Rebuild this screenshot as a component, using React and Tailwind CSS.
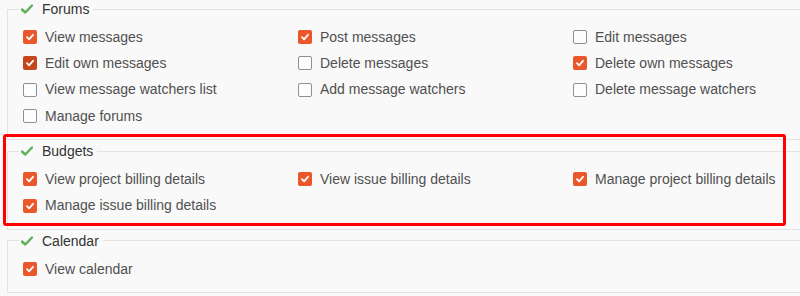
const groups = [
  {
    name: "Forums",
    items: [
      { label: "View messages", checked: true },
      { label: "Post messages", checked: true },
      { label: "Edit messages", checked: false },
      { label: "Edit own messages", checked: true, active: true },
      { label: "Delete messages", checked: false },
      { label: "Delete own messages", checked: true },
      { label: "View message watchers list", checked: false },
      { label: "Add message watchers", checked: false },
      { label: "Delete message watchers", checked: false },
      { label: "Manage forums", checked: false },
    ],
  },
  {
    name: "Budgets",
    items: [
      { label: "View project billing details", checked: true },
      { label: "View issue billing details", checked: true },
      { label: "Manage project billing details", checked: true },
      { label: "Manage issue billing details", checked: true },
    ],
  },
  {
    name: "Calendar",
    items: [{ label: "View calendar", checked: true }],
  },
];

const GreenCheck = () => (
  <svg width="12" height="10" viewBox="0 0 12 10" className="shrink-0">
    <path d="M1 5.5 L4.3 8.5 L11 1.5" fill="none" stroke="#5fae58" strokeWidth="2.4" strokeLinecap="round" strokeLinejoin="round" />
  </svg>
);

const Box = ({ checked, active }) => {
  if (!checked) {
    return <span className="block w-[14px] h-[14px] shrink-0 rounded-[2px] border-[1.5px] border-[#8e8e9c] bg-[#fdfdfd]" />;
  }
  return (
    <span className={`flex items-center justify-center w-[14px] h-[14px] shrink-0 rounded-[2px] ${active ? "bg-[#c4461c]" : "bg-[#ea572a]"}`}>
      <svg width="10" height="10" viewBox="0 0 10 10">
        <path d="M2 5.2 L4.1 7.3 L8 2.8" fill="none" stroke="#fff" strokeWidth="1.8" strokeLinecap="round" strokeLinejoin="round" />
      </svg>
    </span>
  );
};

const Group = ({ group, first }) => (
  <fieldset className={`border border-[#e3e3e3] ml-[7px] mr-[-40px] pb-[10px] ${first ? "" : "mt-[2px]"}`}>
    <legend className="ml-[11px] px-[2px] pr-[4px] h-[18px] flex items-center gap-[9px] leading-[18px] text-[14px] text-[#333]">
      <GreenCheck />
      <span>{group.name}</span>
    </legend>
    <div className="grid grid-cols-[275px_275px_275px] auto-rows-[26.33px] pl-[15px] pt-[6px]">
      {group.items.map((item, i) => (
        <label key={i} className="flex items-center gap-[8px] text-[14px] text-[#505050] whitespace-nowrap">
          <Box checked={item.checked} active={item.active} />
          <span>{item.label}</span>
        </label>
      ))}
    </div>
  </fieldset>
);

export default function App() {
  return (
    <div className="relative w-[800px] h-[296px] overflow-hidden bg-[#f9f9f9] font-['Liberation_Sans',Arial,sans-serif]">
      {groups.map((g, i) => (
        <Group key={g.name} group={g} first={i === 0} />
      ))}
      <div className="absolute left-[3px] top-[134px] w-[783px] h-[92px] border-[3px] border-[#ff0000] rounded-[3px] pointer-events-none" />
    </div>
  );
}
